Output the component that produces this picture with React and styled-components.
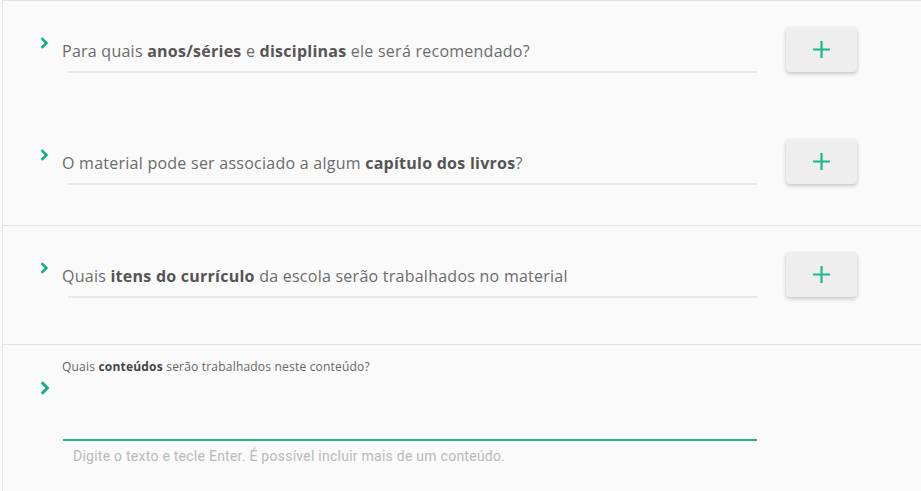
import React from 'react';
import styled, { createGlobalStyle } from 'styled-components';

const GlobalStyle = createGlobalStyle`
  html, body {
    margin: 0;
    padding: 0;
    background: #fafafa;
  }
  body {
    font-family: "Open Sans", "Liberation Sans", sans-serif;
  }
`;

const Page = styled.div`
  margin-left: 2px;
  min-height: 491px;
  border-left: 1px solid #e6e6e6;
  border-top: 1px solid #e2e2e2;
  box-sizing: border-box;
  background: #fafafa;
`;

// Cada bloco de perguntas
const Section = styled.section`
  border-bottom: ${(p) => (p.$last ? 'none' : '1px solid #e2e2e2')};
  padding-bottom: ${(p) => p.$extra || 0}px;
`;

const Row = styled.div`
  display: flex;
  align-items: flex-start;
  height: ${(p) => p.$height || 112}px;
  padding: ${(p) => p.$top || 26}px 0 0 37px;
  box-sizing: border-box;
`;

const Chevron = styled.div`
  width: 22px;
  flex: none;
  box-sizing: border-box;
  margin-top: ${(p) => p.$top || 10}px;
  padding-left: 0;
  color: #17ad84;
  svg {
    display: block;
  }
`;

const Field = styled.div`
  width: 695px;
  flex: none;
  padding-top: 14px;
`;

const Question = styled.div`
  font-size: 16px;
  line-height: 20px;
  color: #6b6b6b;
  letter-spacing: 0.25px;

  b {
    font-weight: 700;
    color: #555;
  }
`;

const Underline = styled.div`
  margin: 10px 0 0 6px;
  height: 2px;
  background: #e8e8e8;
`;

const AddButton = styled.button`
  margin-left: 29px;
  width: 71px;
  height: 45px;
  flex: none;
  border: none;
  border-radius: 4px;
  background: #eeeeee;
  box-shadow: 0 2px 4px rgba(0, 0, 0, 0.2), 0 0 2px rgba(0, 0, 0, 0.06);
  display: flex;
  align-items: center;
  justify-content: center;
  color: #1db88e;
  cursor: pointer;
  padding: 0;
`;

const InputField = styled.div`
  width: 695px;
  flex: none;
`;

const SmallLabel = styled.div`
  font-size: 12px;
  line-height: 14px;
  letter-spacing: 0.2px;
  color: #666;

  b {
    font-weight: 700;
    color: #444;
  }
`;

const Input = styled.input`
  display: block;
  width: 694px;
  margin: 0 0 0 1px;
  height: 67px;
  box-sizing: border-box;
  border: none;
  border-bottom: 2px solid #1db88e;
  background: transparent;
  outline: none;
  font-family: "Roboto", sans-serif;
  font-size: 14px;
`;

const Helper = styled.div`
  margin: 7px 0 0 11px;
  font-family: "Roboto", "Liberation Sans", sans-serif;
  font-size: 14px;
  line-height: 16px;
  letter-spacing: 0.25px;
  color: #b9b9b9;
`;

const ChevronIcon = ({ h = 12 }) => (
  <svg width={h * 0.7} height={h} viewBox="0 0 7 10" fill="none">
    <path d="M1.3 1 L5.3 5 L1.3 9" stroke="currentColor" strokeWidth="2.1" />
  </svg>
);

const PlusIcon = () => (
  <svg width="17" height="17" viewBox="0 0 17 17">
    <path d="M8.5 0 V17 M0 8.5 H17" stroke="currentColor" strokeWidth="2.2" />
  </svg>
);

const questions = [
  [
    <>Para quais <b>anos/séries</b> e <b>disciplinas</b> ele será recomendado?</>,
    <>O material pode ser associado a algum <b>capítulo dos livros</b>?</>,
  ],
  [<>Quais <b>itens do currículo</b> da escola serão trabalhados no material</>],
];

const App = () => {
  return (
    <Page>
      <GlobalStyle />
      {questions.map((group, gi) => (
        <Section key={gi} $extra={gi === 1 ? 6 : 0}>
          {group.map((q, qi) => (
            <Row key={qi}>
              <Chevron>
                <ChevronIcon />
              </Chevron>
              <Field>
                <Question>{q}</Question>
                <Underline />
              </Field>
              <AddButton aria-label="Adicionar">
                <PlusIcon />
              </AddButton>
            </Row>
          ))}
        </Section>
      ))}
      <Section $last>
        <Row $height={147} $top={15}>
          <Chevron $top={21}>
            <ChevronIcon h={14} />
          </Chevron>
          <InputField>
            <SmallLabel>
              Quais <b>conteúdos</b> serão trabalhados neste conteúdo?
            </SmallLabel>
            <Input type="text" />
            <Helper>Digite o texto e tecle Enter. É possível incluir mais de um conteúdo.</Helper>
          </InputField>
        </Row>
      </Section>
    </Page>
  );
};

export default App;
